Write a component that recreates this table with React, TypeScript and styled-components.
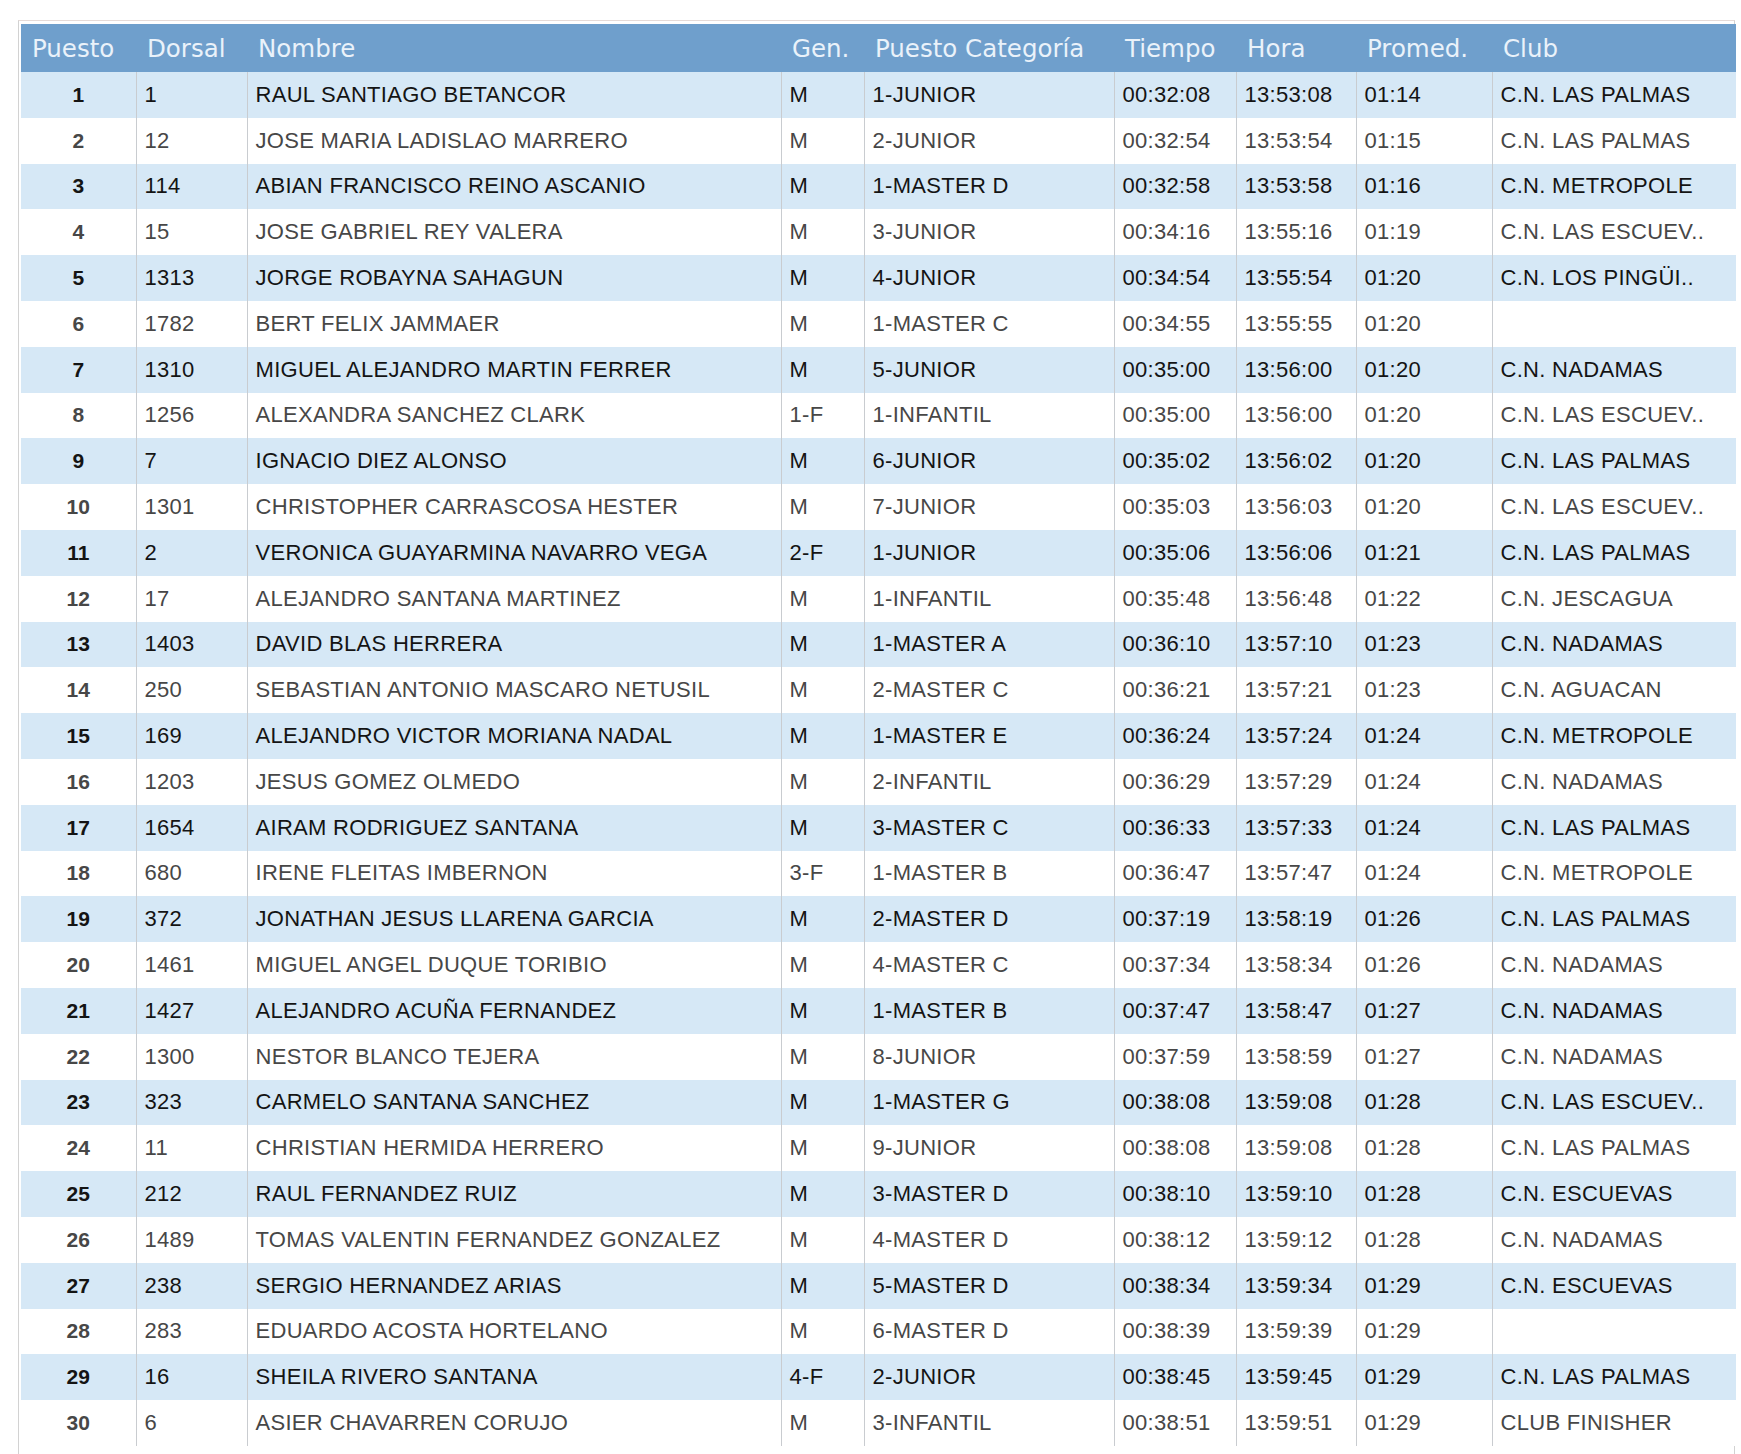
import React from "react"
import styled, { createGlobalStyle } from "styled-components"

type Result = {
  puesto: number
  dorsal: string
  nombre: string
  gen: string
  categoria: string
  tiempo: string
  hora: string
  promedio: string
  club: string
}

const rows: Array<[string, string, string, string, string, string, string, string]> = [
  ["1", "RAUL SANTIAGO BETANCOR", "M", "1-JUNIOR", "00:32:08", "13:53:08", "01:14", "C.N. LAS PALMAS"],
  ["12", "JOSE MARIA LADISLAO MARRERO", "M", "2-JUNIOR", "00:32:54", "13:53:54", "01:15", "C.N. LAS PALMAS"],
  ["114", "ABIAN FRANCISCO REINO ASCANIO", "M", "1-MASTER D", "00:32:58", "13:53:58", "01:16", "C.N. METROPOLE"],
  ["15", "JOSE GABRIEL REY VALERA", "M", "3-JUNIOR", "00:34:16", "13:55:16", "01:19", "C.N. LAS ESCUEV.."],
  ["1313", "JORGE ROBAYNA SAHAGUN", "M", "4-JUNIOR", "00:34:54", "13:55:54", "01:20", "C.N. LOS PINGÜI.."],
  ["1782", "BERT FELIX JAMMAER", "M", "1-MASTER C", "00:34:55", "13:55:55", "01:20", ""],
  ["1310", "MIGUEL ALEJANDRO MARTIN FERRER", "M", "5-JUNIOR", "00:35:00", "13:56:00", "01:20", "C.N. NADAMAS"],
  ["1256", "ALEXANDRA SANCHEZ CLARK", "1-F", "1-INFANTIL", "00:35:00", "13:56:00", "01:20", "C.N. LAS ESCUEV.."],
  ["7", "IGNACIO DIEZ ALONSO", "M", "6-JUNIOR", "00:35:02", "13:56:02", "01:20", "C.N. LAS PALMAS"],
  ["1301", "CHRISTOPHER CARRASCOSA HESTER", "M", "7-JUNIOR", "00:35:03", "13:56:03", "01:20", "C.N. LAS ESCUEV.."],
  ["2", "VERONICA GUAYARMINA NAVARRO VEGA", "2-F", "1-JUNIOR", "00:35:06", "13:56:06", "01:21", "C.N. LAS PALMAS"],
  ["17", "ALEJANDRO SANTANA MARTINEZ", "M", "1-INFANTIL", "00:35:48", "13:56:48", "01:22", "C.N. JESCAGUA"],
  ["1403", "DAVID BLAS HERRERA", "M", "1-MASTER A", "00:36:10", "13:57:10", "01:23", "C.N. NADAMAS"],
  ["250", "SEBASTIAN ANTONIO MASCARO NETUSIL", "M", "2-MASTER C", "00:36:21", "13:57:21", "01:23", "C.N. AGUACAN"],
  ["169", "ALEJANDRO VICTOR MORIANA NADAL", "M", "1-MASTER E", "00:36:24", "13:57:24", "01:24", "C.N. METROPOLE"],
  ["1203", "JESUS GOMEZ OLMEDO", "M", "2-INFANTIL", "00:36:29", "13:57:29", "01:24", "C.N. NADAMAS"],
  ["1654", "AIRAM RODRIGUEZ SANTANA", "M", "3-MASTER C", "00:36:33", "13:57:33", "01:24", "C.N. LAS PALMAS"],
  ["680", "IRENE FLEITAS IMBERNON", "3-F", "1-MASTER B", "00:36:47", "13:57:47", "01:24", "C.N. METROPOLE"],
  ["372", "JONATHAN JESUS LLARENA GARCIA", "M", "2-MASTER D", "00:37:19", "13:58:19", "01:26", "C.N. LAS PALMAS"],
  ["1461", "MIGUEL ANGEL DUQUE TORIBIO", "M", "4-MASTER C", "00:37:34", "13:58:34", "01:26", "C.N. NADAMAS"],
  ["1427", "ALEJANDRO ACUÑA FERNANDEZ", "M", "1-MASTER B", "00:37:47", "13:58:47", "01:27", "C.N. NADAMAS"],
  ["1300", "NESTOR BLANCO TEJERA", "M", "8-JUNIOR", "00:37:59", "13:58:59", "01:27", "C.N. NADAMAS"],
  ["323", "CARMELO SANTANA SANCHEZ", "M", "1-MASTER G", "00:38:08", "13:59:08", "01:28", "C.N. LAS ESCUEV.."],
  ["11", "CHRISTIAN HERMIDA HERRERO", "M", "9-JUNIOR", "00:38:08", "13:59:08", "01:28", "C.N. LAS PALMAS"],
  ["212", "RAUL FERNANDEZ RUIZ", "M", "3-MASTER D", "00:38:10", "13:59:10", "01:28", "C.N. ESCUEVAS"],
  ["1489", "TOMAS VALENTIN FERNANDEZ GONZALEZ", "M", "4-MASTER D", "00:38:12", "13:59:12", "01:28", "C.N. NADAMAS"],
  ["238", "SERGIO HERNANDEZ ARIAS", "M", "5-MASTER D", "00:38:34", "13:59:34", "01:29", "C.N. ESCUEVAS"],
  ["283", "EDUARDO ACOSTA HORTELANO", "M", "6-MASTER D", "00:38:39", "13:59:39", "01:29", ""],
  ["16", "SHEILA RIVERO SANTANA", "4-F", "2-JUNIOR", "00:38:45", "13:59:45", "01:29", "C.N. LAS PALMAS"],
  ["6", "ASIER CHAVARREN CORUJO", "M", "3-INFANTIL", "00:38:51", "13:59:51", "01:29", "CLUB FINISHER"],
]

const results: Result[] = rows.map((r, i) => ({
  puesto: i + 1,
  dorsal: r[0],
  nombre: r[1],
  gen: r[2],
  categoria: r[3],
  tiempo: r[4],
  hora: r[5],
  promedio: r[6],
  club: r[7],
}))

const columns = [
  { label: "Puesto", width: 115 },
  { label: "Dorsal", width: 111 },
  { label: "Nombre", width: 534 },
  { label: "Gen.", width: 83 },
  { label: "Puesto Categoría", width: 250 },
  { label: "Tiempo", width: 122 },
  { label: "Hora", width: 120 },
  { label: "Promed.", width: 136 },
  { label: "Club", width: 244 },
]

const GlobalStyle = createGlobalStyle`
  html, body {
    margin: 0;
    padding: 0;
    background: #ffffff;
  }
`

const Frame = styled.div`
  margin: 20px 0 0 18px;
  width: 1717px;
  padding: 3px 0 20px 2px;
  border-top: 1px solid #e6dbd8;
  border-left: 1px solid #d2d2d2;
  border-right: 1px solid #d2d2d2;
  box-sizing: border-box;
`

const Table = styled.table`
  width: 1715px;
  table-layout: fixed;
  border-collapse: collapse;
  border-spacing: 0;
`

const HeadCell = styled.th`
  height: 48px;
  padding: 0 0 0 11px;
  background: #6f9fcc;
  color: #eaf2fa;
  font-family: "DejaVu Sans", Verdana, sans-serif;
  font-size: 24.5px;
  font-weight: normal;
  text-align: left;
  white-space: nowrap;
  overflow: hidden;
`

const Row = styled.tr<{ $alt: boolean }>`
  height: 45.8px;
  background: ${(p) => (p.$alt ? "#d6e8f6" : "#ffffff")};
  color: ${(p) => (p.$alt ? "#141414" : "#474747")};
`

const Cell = styled.td`
  padding: 0 0 0 8px;
  border-left: 1px solid #c9ccd0;
  font-family: "Liberation Sans", Arial, sans-serif;
  font-size: 22px;
  letter-spacing: 0.3px;
  white-space: nowrap;
  overflow: hidden;
`

const RankCell = styled(Cell)`
  padding: 0;
  border-left: none;
  text-align: center;
  font-weight: bold;
  font-size: 21px;
  letter-spacing: 0;
`

export default function App() {
  return (
    <>
      <GlobalStyle />
      <Frame>
        <Table>
          <colgroup>
            {columns.map((c) => (
              <col key={c.label} style={{ width: c.width }} />
            ))}
          </colgroup>
          <thead>
            <tr>
              {columns.map((c) => (
                <HeadCell key={c.label}>{c.label}</HeadCell>
              ))}
            </tr>
          </thead>
          <tbody>
            {results.map((r) => (
              <Row key={r.puesto} $alt={r.puesto % 2 === 1}>
                <RankCell>{r.puesto}</RankCell>
                <Cell>{r.dorsal}</Cell>
                <Cell>{r.nombre}</Cell>
                <Cell>{r.gen}</Cell>
                <Cell>{r.categoria}</Cell>
                <Cell>{r.tiempo}</Cell>
                <Cell>{r.hora}</Cell>
                <Cell>{r.promedio}</Cell>
                <Cell>{r.club}</Cell>
              </Row>
            ))}
          </tbody>
        </Table>
      </Frame>
    </>
  )
}
